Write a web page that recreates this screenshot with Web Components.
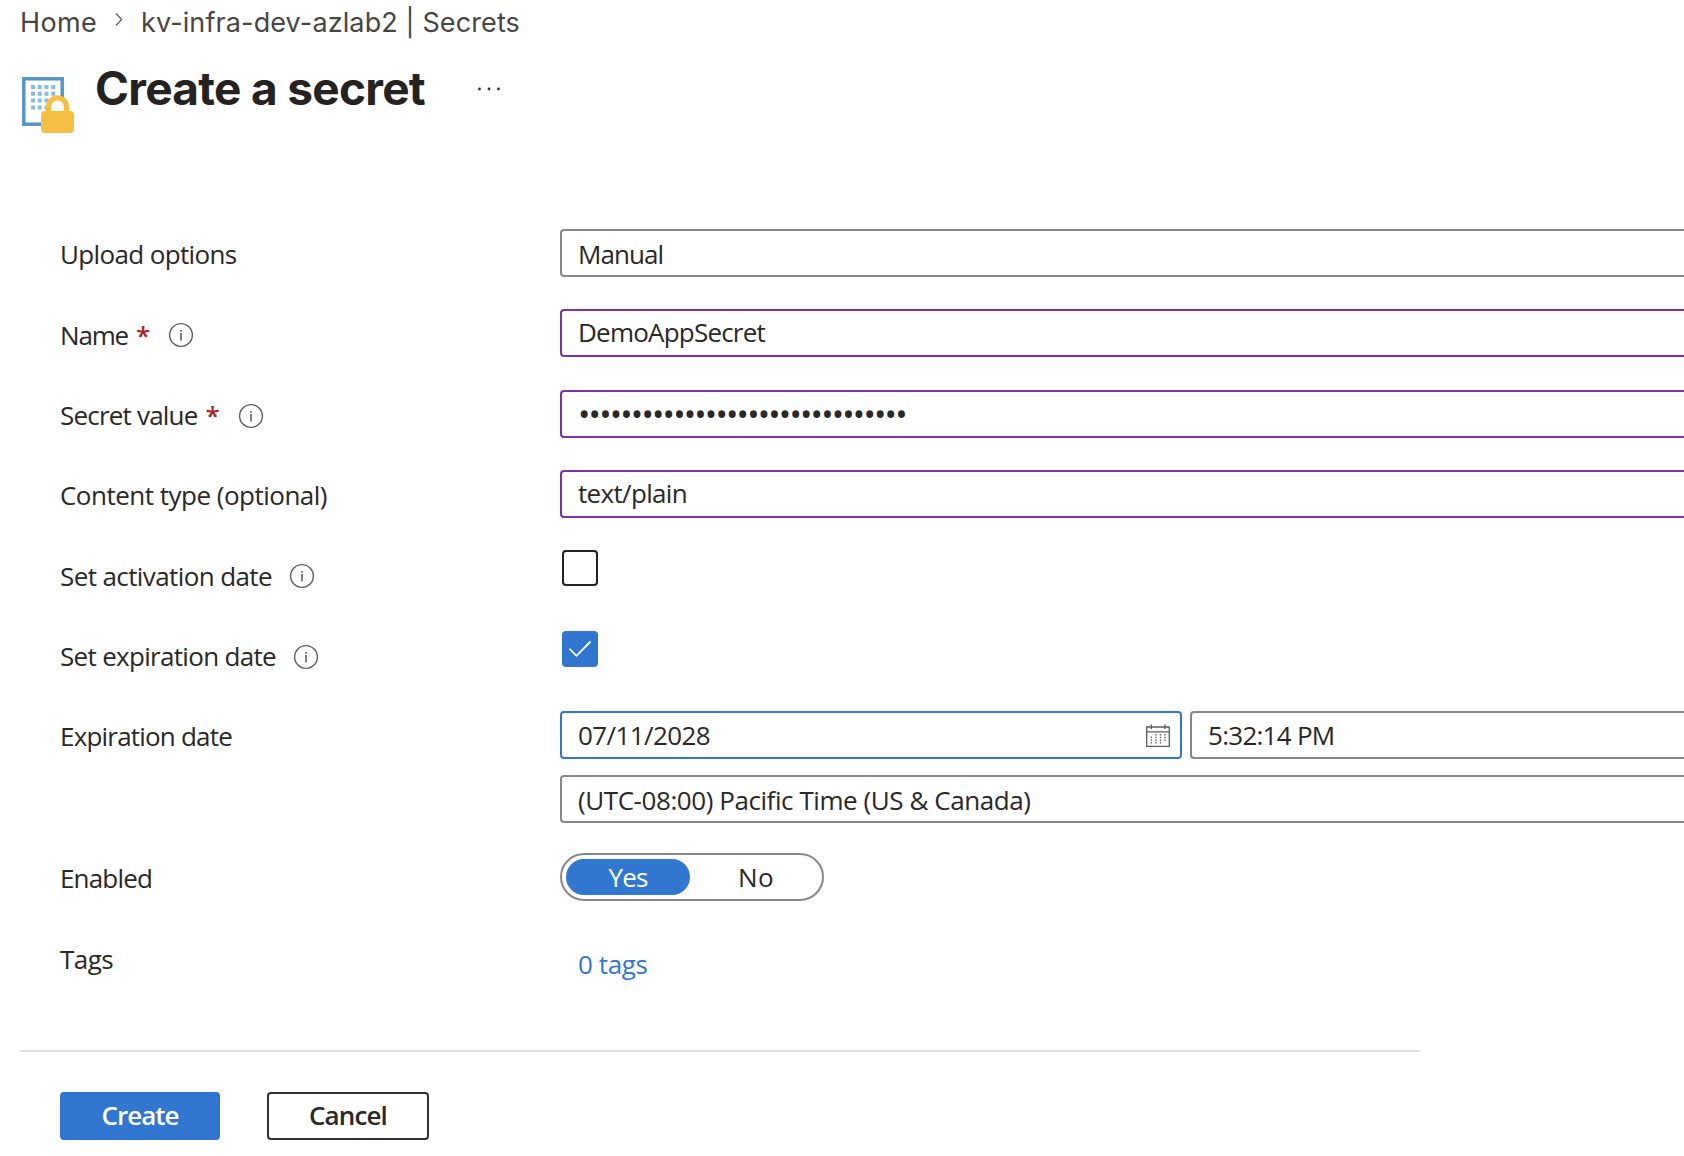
<!DOCTYPE html>
<html lang="en">
<head>
<meta charset="utf-8">
<title>Create a secret</title>
<style>
  body {
    margin: 0;
    height: 1156px;
    overflow: hidden;
    background: #fff;
    color: #292827;
    font: 26px/36px "Open Sans", "Noto Sans", sans-serif;
  }
</style>
</head>
<body>
<secret-page></secret-page>

<script>
// Text set to a given advance width, the difference is spread over the letters.
class FitText extends HTMLElement {
  constructor() {
    super();
    this.attachShadow({ mode: "open" });
    this.shadowRoot.innerHTML = `
      <style>
        :host { display: inline-block; vertical-align: top; white-space: nowrap; }
        span { display: inline-block; vertical-align: top; }
      </style>
      <span><slot></slot></span>
    `;
  }

  connectedCallback() {
    const width = Number(this.getAttribute("width"));
    const span = this.shadowRoot.querySelector("span");
    const natural = span.getBoundingClientRect().width;
    span.style.letterSpacing = `${(width - natural) / this.textContent.length}px`;
    this.style.width = `${width}px`;
  }
}

class BreadCrumb extends HTMLElement {
  constructor() {
    super();
    this.attachShadow({ mode: "open" });
    this.shadowRoot.innerHTML = `
      <style>
        :host {
          display: flex;
          height: 44px;
          padding-left: 20px;
          color: #484644;
          font: 27px/46px Inter, sans-serif;
        }
        svg { margin: 12px 18px 0 18px; }
      </style>
      <fit-text width="77">Home</fit-text>
      <svg width="8" height="15" viewBox="0 0 8 15" fill="none" stroke="#605e5c" stroke-width="1.3"><path d="M1 1.5l5.6 6L1 13.5"/></svg>
      <fit-text width="379">kv-infra-dev-azlab2 | Secrets</fit-text>
    `;
  }
}

class PageTitle extends HTMLElement {
  constructor() {
    super();
    this.attachShadow({ mode: "open" });
    this.shadowRoot.innerHTML = `
      <style>
        :host { display: flex; height: 185px; padding-left: 22px; }
        .icon { margin-top: 32px; }
        h1 {
          margin: 14px 0 0 20px;
          color: #242322;
          font: 700 46px/60px Inter, sans-serif;
        }
        .more { margin: 42px 0 0 52px; }
      </style>
      <svg class="icon" width="53" height="58" viewBox="0 0 53 58">
        <rect x="1.8" y="2.8" width="38.4" height="45.4" fill="#fff" stroke="#5497c5" stroke-width="3.5"/>
        <g stroke="#84bfdd" stroke-width="4" stroke-dasharray="4 2.75">
          <path d="M9 11h24.5M9 17.8h24.5M9 24.6h24.5M9 31.4h24.5"/>
        </g>
        <path d="M26.600 37v-6.300a8.900 8.900 0 0 1 17.800 0V37" fill="#fff" stroke="#f4bf43" stroke-width="5.200"/>
        <rect x="19" y="35" width="33" height="22" rx="4" fill="#f4bf43"/>
      </svg>
      <h1><fit-text width="330">Create a secret</fit-text></h1>
      <svg class="more" width="24" height="6" viewBox="0 0 24 6" fill="#323130">
        <circle cx="2.500" cy="3" r="1.400"/><circle cx="12" cy="3" r="1.400"/><circle cx="21.500" cy="3" r="1.400"/>
      </svg>
    `;
  }
}

class FormRow extends HTMLElement {
  constructor() {
    super();
    this.attachShadow({ mode: "open" });
  }

  connectedCallback() {
    const required = this.hasAttribute("required");
    const info = this.getAttribute("info");
    this.shadowRoot.innerHTML = `
      <style>
        :host {
          display: grid;
          grid-template-columns: 500px 1fr;
          align-items: start;
          padding-left: 60px;
          height: 80px;
        }
        .label {
          display: flex;
          padding-top: var(--label-top, 7px);
        }
        .required { margin-left: 8px; color: #a4262c; font-weight: 600; }
        .info { margin-top: ${info}px; margin-left: ${required ? 18 : 17}px; }
      </style>
      <div class="label">
        <fit-text width="${this.getAttribute("label-width")}">${this.getAttribute("label")}</fit-text>
        ${required ? `<span class="required">*</span>` : ""}
        ${info ? `
          <svg class="info" width="26" height="26" viewBox="0 0 26 26">
            <circle cx="13" cy="13" r="11.400" fill="none" stroke="#605e5c" stroke-width="1.400"/>
            <path d="M13 11v7.500M13 8v1.700" stroke="#605e5c" stroke-width="1.600"/>
          </svg>` : ""}
      </div>
      <slot></slot>
    `;
  }
}

class TextField extends HTMLElement {
  constructor() {
    super();
    this.attachShadow({ mode: "open" });
    this.shadowRoot.innerHTML = `
      <style>
        :host {
          display: flex;
          box-sizing: border-box;
          height: 48px;
          padding: var(--text-top, 5px) 10px 0 16px;
          border: 2px solid #8a8886;
          border-right: 0;
          border-radius: 4px 0 0 4px;
        }
        :host([edited]) { border-color: #8031a7; --text-top: 3px; }
        :host([picker]) {
          width: 622px;
          border: 2px solid #3277cf;
          border-radius: 4px;
          justify-content: space-between;
        }
      </style>
      <slot></slot>
    `;
  }
}

class CalendarIcon extends HTMLElement {
  constructor() {
    super();
    this.attachShadow({ mode: "open" });
    this.shadowRoot.innerHTML = `
      <style>
        :host { display: block; margin-top: 6px; height: 25px; }
        svg { display: block; }
      </style>
      <svg width="24" height="25" viewBox="0 0 24 25" fill="none" stroke="#605e5c" stroke-width="1.300">
        <path d="M.7 4h22.600v19.300H.7zM.7 8.800h22.600M5.300 1.500v4.500M19 1.500v4.500"/>
        <path stroke-dasharray="1.500 1.200" d="M5.300 13.500v8M9.900 11v10.500M14.500 11v10.500M19 11v8"/>
      </svg>
    `;
  }
}

class CheckBox extends HTMLElement {
  constructor() {
    super();
    this.attachShadow({ mode: "open" });
    this.shadowRoot.innerHTML = `
      <style>
        :host {
          display: block;
          box-sizing: border-box;
          width: 36px;
          height: 36px;
          margin-left: 2px;
          border: 2px solid #242322;
          border-radius: 4px;
        }
        :host([checked]) { background: #3277cf; border-color: #3277cf; }
        svg { display: none; }
        :host([checked]) svg { display: block; }
      </style>
      <svg width="32" height="32" viewBox="0 0 32 32" fill="none" stroke="#fff" stroke-width="1.800"><path d="M5.500 15.800l7 7L26.500 8.500"/></svg>
    `;
  }
}

class YesNo extends HTMLElement {
  constructor() {
    super();
    this.attachShadow({ mode: "open" });
    this.shadowRoot.innerHTML = `
      <style>
        :host {
          display: flex;
          box-sizing: border-box;
          width: 264px;
          height: 48px;
          padding: 4px;
          border: 2px solid #8a8886;
          border-radius: 24px;
        }
        div {
          flex: 0 0 124px;
          height: 36px;
          border-radius: 18px;
          text-align: center;
        }
        .on { background: #3277cf; color: #fff; }
        .off { margin-left: 4px; }
      </style>
      <div class="on"><fit-text width="39">Yes</fit-text></div>
      <div class="off"><fit-text width="36">No</fit-text></div>
    `;
  }
}

class ActionButton extends HTMLElement {
  constructor() {
    super();
    this.attachShadow({ mode: "open" });
    this.shadowRoot.innerHTML = `
      <style>
        :host {
          display: block;
          box-sizing: border-box;
          width: 162px;
          height: 48px;
          border: 2px solid #323130;
          border-radius: 4px;
          padding-top: 3px;
          text-align: center;
          font-weight: 600;
        }
        :host([primary]) {
          width: 160px;
          border-color: #3277cf;
          background: #3277cf;
          color: #fff;
        }
      </style>
      <slot></slot>
    `;
  }
}

class SecretPage extends HTMLElement {
  constructor() {
    super();
    this.attachShadow({ mode: "open" });
    this.shadowRoot.innerHTML = `
      <style>
        :host { display: block; }
        .tall { height: 81px; }
        .low { --label-top: 8px; }
        .dates { display: grid; gap: 16px; }
        .pair { display: grid; grid-template-columns: 622px 1fr; gap: 8px; --text-top: 4px; }
        .expiry { height: 142px; }
        .tags { height: 117px; }
        .link { padding: 13px 0 0 18px; color: #3277cf; }
        .bullets { margin-top: 1px; font-size: 33px; }
        footer {
          display: flex;
          gap: 47px;
          width: 1360px;
          margin-left: 20px;
          padding: 40px 0 0 40px;
          border-top: 2px solid #dfdfdf;
        }
      </style>
      <bread-crumb></bread-crumb>
      <page-title></page-title>
      <form-row label="Upload options" label-width="176.500">
        <text-field><fit-text width="85">Manual</fit-text></text-field>
      </form-row>
      <form-row class="tall low" label="Name" label-width="68" required info="5">
        <text-field edited><fit-text width="187">DemoAppSecret</fit-text></text-field>
      </form-row>
      <form-row label="Secret value" label-width="137.500" required info="6">
        <text-field edited><fit-text class="bullets" width="327.700">•••••••••••••••••••••••••••••••</fit-text></text-field>
      </form-row>
      <form-row label="Content type (optional)" label-width="267">
        <text-field edited><fit-text width="109">text/plain</fit-text></text-field>
      </form-row>
      <form-row class="tall low" label="Set activation date" label-width="212" info="5">
        <check-box></check-box>
      </form-row>
      <form-row label="Set expiration date" label-width="216" info="6">
        <check-box checked></check-box>
      </form-row>
      <form-row class="expiry" label="Expiration date" label-width="172">
        <div class="dates">
          <div class="pair">
            <text-field picker><fit-text width="132">07/11/2028</fit-text><calendar-icon></calendar-icon></text-field>
            <text-field><fit-text width="126.500">5:32:14 PM</fit-text></text-field>
          </div>
          <text-field><fit-text width="452.500">(UTC-08:00) Pacific Time (US &amp; Canada)</fit-text></text-field>
        </div>
      </form-row>
      <form-row label="Enabled" label-width="92">
        <yes-no></yes-no>
      </form-row>
      <form-row class="tags low" label="Tags" label-width="53">
        <div class="link"><fit-text width="69.500">0 tags</fit-text></div>
      </form-row>
      <footer>
        <action-button primary><fit-text width="77">Create</fit-text></action-button>
        <action-button><fit-text width="78">Cancel</fit-text></action-button>
      </footer>
    `;
  }
}

// FitText goes last: it measures against the styles of its parents.
customElements.define("bread-crumb", BreadCrumb);
customElements.define("page-title", PageTitle);
customElements.define("form-row", FormRow);
customElements.define("text-field", TextField);
customElements.define("calendar-icon", CalendarIcon);
customElements.define("check-box", CheckBox);
customElements.define("yes-no", YesNo);
customElements.define("action-button", ActionButton);
customElements.define("secret-page", SecretPage);
customElements.define("fit-text", FitText);
</script>
</body>
</html>
